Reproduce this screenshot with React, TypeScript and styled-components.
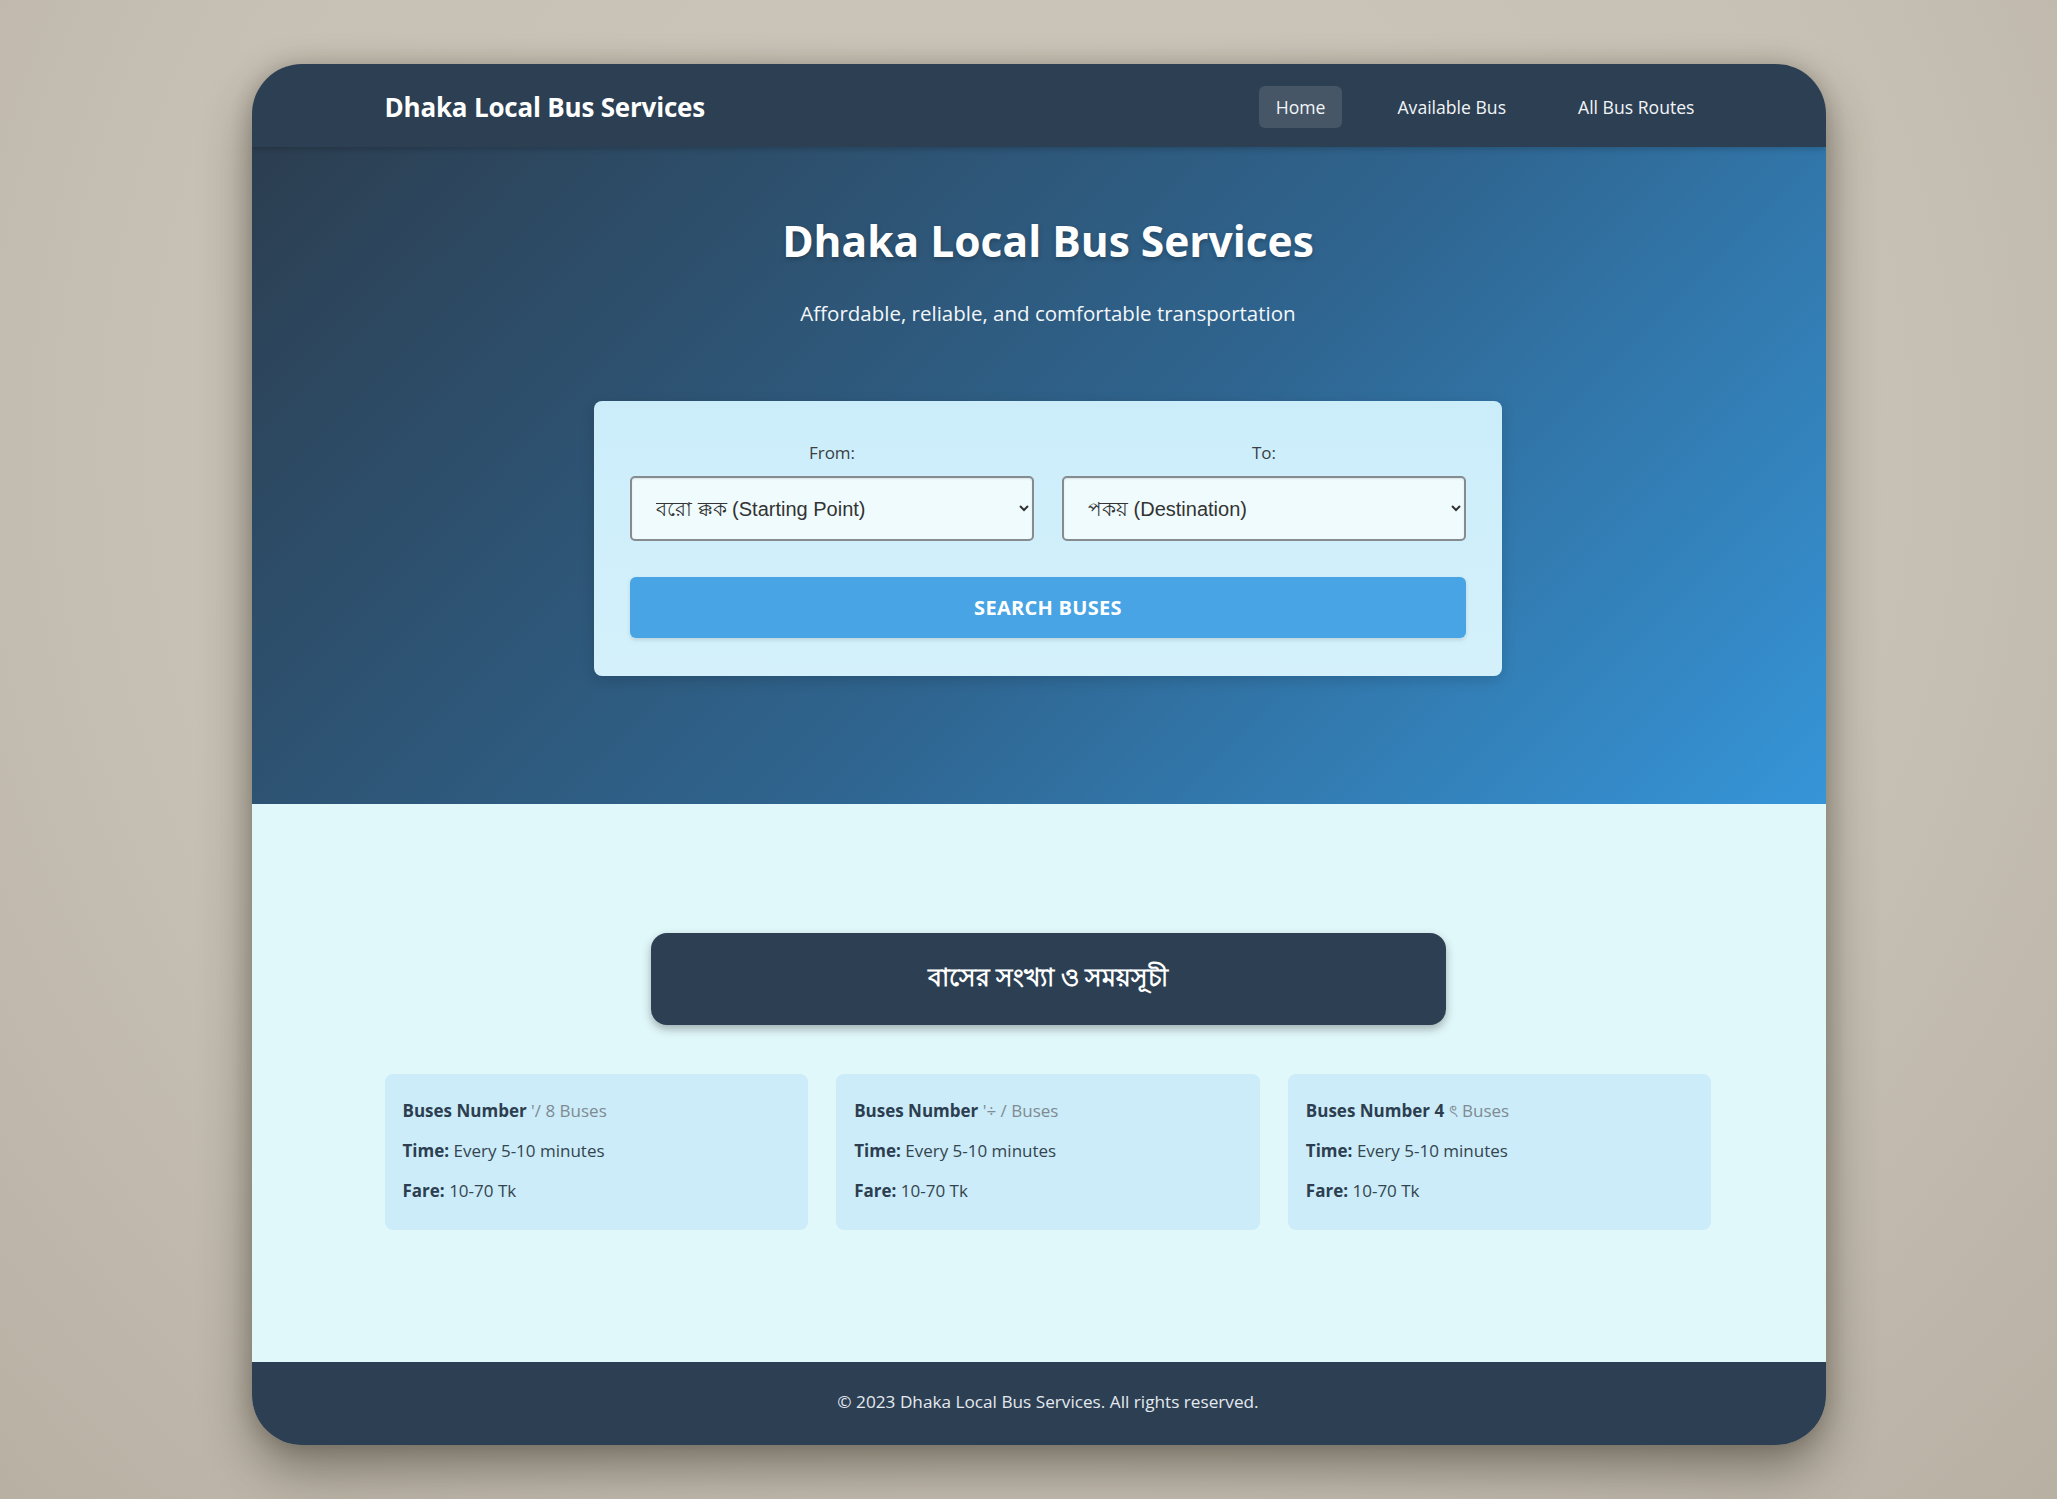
import React, {useState} from 'react';
import styled, {createGlobalStyle} from "styled-components";

const buses = [
    {id: 1, number: 'Buses Number', count: "'/ 8 Buses", time: 'Every 5-10 minutes', fare: '10-70 Tk'},
    {id: 2, number: 'Buses Number', count: "'÷ / Buses", time: 'Every 5-10 minutes', fare: '10-70 Tk'},
    {id: 3, number: 'Buses Number 4', count: 'ৎ Buses', time: 'Every 5-10 minutes', fare: '10-70 Tk'},
]

const navLinks = ['Home', 'Available Bus', 'All Bus Routes']

export default function App() {
    const [from, setFrom] = useState('start')
    const [to, setTo] = useState('dest')
    const [active, setActive] = useState('Home')

    return (
        <Page>
            <GlobalStyle/>
            <Frame>
                {/*Header*/}
                <Header>
                    <Container>
                        <HeaderRow>
                            <Brand>Dhaka Local Bus Services</Brand>
                            <Nav>
                                {navLinks.map(l => (
                                    <NavLink key={l} active={active === l} onClick={() => setActive(l)}>{l}</NavLink>
                                ))}
                            </Nav>
                        </HeaderRow>
                    </Container>
                </Header>

                {/*Hero with search*/}
                <Hero>
                    <HeroTitle>Dhaka Local Bus Services</HeroTitle>
                    <HeroSubtitle>Affordable, reliable, and comfortable transportation</HeroSubtitle>
                    <SearchCard>
                        <Fields>
                            <Field>
                                <Label>From:</Label>
                                <Select value={from} onChange={e => setFrom(e.target.value)}>
                                    <option value="start">বরো ক্কক (Starting Point)</option>
                                    <option value="gabtoli">Gabtoli</option>
                                    <option value="mirpur">Mirpur</option>
                                </Select>
                            </Field>
                            <Field>
                                <Label>To:</Label>
                                <Select value={to} onChange={e => setTo(e.target.value)}>
                                    <option value="dest">পকয় (Destination)</option>
                                    <option value="motijheel">Motijheel</option>
                                    <option value="sadarghat">Sadarghat</option>
                                </Select>
                            </Field>
                        </Fields>
                        <SearchButton>Search Buses</SearchButton>
                    </SearchCard>
                </Hero>

                {/*Schedule*/}
                <Schedule>
                    <Container>
                        <ScheduleTitle>বাসের সংখ্যা ও সময়সূচী</ScheduleTitle>
                        <CardsGrid>
                            {buses.map(b => (
                                <BusCard key={b.id}>
                                    <Line><b>{b.number}</b> <Muted>{b.count}</Muted></Line>
                                    <Line><b>Time:</b> {b.time}</Line>
                                    <Line><b>Fare:</b> {b.fare}</Line>
                                </BusCard>
                            ))}
                        </CardsGrid>
                    </Container>
                </Schedule>

                <Footer>© 2023 Dhaka Local Bus Services. All rights reserved.</Footer>
            </Frame>
        </Page>
    );
}

// Styles
const GlobalStyle = createGlobalStyle`
  * {
    box-sizing: border-box;
  }

  body {
    margin: 0;
    font-family: "Segoe UI", "Open Sans", "Noto Sans", sans-serif;
    background: #c9c2b6;
  }
`

const Page = styled.div`
  min-height: 1499px;
  padding: 64px 0 55px 252px;
  background: radial-gradient(ellipse at 50% 30%, #cdc6bb 0%, #c7c0b4 60%, #b8b0a3 100%);
`

const Frame = styled.div`
  width: 1574px;
  border-radius: 50px;
  overflow: hidden;
  box-shadow: 0 24px 50px rgba(40, 35, 25, 0.45), 0 0 20px rgba(40, 35, 25, 0.2);
`

const Container = styled.div`
  max-width: 1327px;
  margin: 0 auto;
`

const Header = styled.header`
  height: 83px;
  padding-left: 18px;
  background: #2d3f53;
  display: flex;
  align-items: center;
  box-shadow: 0 2px 6px rgba(0, 0, 0, 0.2);
  position: relative;
  z-index: 1;
`

const HeaderRow = styled.div`
  display: flex;
  align-items: center;
  justify-content: space-between;
  width: 1327px;
`

const Brand = styled.h1`
  margin: 2px 0 0;
  color: #fff;
  font-size: 26px;
  font-weight: 700;
  letter-spacing: -0.2px;
`

const Nav = styled.nav`
  display: flex;
  gap: 38px;
  margin-top: 2px;
`

const NavLink = styled.a<{ active?: boolean }>`
  padding: 9px 17px;
  border-radius: 6px;
  color: #f2f5f8;
  font-size: 17.6px;
  cursor: pointer;
  background: ${p => p.active ? 'rgba(255, 255, 255, 0.12)' : 'transparent'};
`

const Hero = styled.section`
  height: 657px;
  padding: 68px 0 0 18px;
  display: flex;
  flex-direction: column;
  align-items: center;
  background: linear-gradient(135deg, #2c3e50 0%, #2f6590 55%, #3695d8 100%);
  color: #fff;
`

const HeroTitle = styled.h2`
  margin: 0;
  font-size: 42.5px;
  font-weight: 700;
  line-height: 1.2;
  text-shadow: 0 2px 4px rgba(0, 0, 0, 0.25);
`

const HeroSubtitle = styled.p`
  margin: 33px 0 0;
  font-size: 20.5px;
  color: #f3f7fa;
`

const SearchCard = styled.div`
  margin-top: 74px;
  width: 908px;
  padding: 40px 36px 38px;
  border-radius: 8px;
  background: linear-gradient(180deg, #cbedfa 0%, #d4f1fb 100%);
  box-shadow: 0 4px 14px rgba(0, 0, 0, 0.15);
`

const Fields = styled.div`
  display: grid;
  grid-template-columns: 1fr 1fr;
  gap: 28px;
`

const Field = styled.div`
  display: flex;
  flex-direction: column;
  align-items: center;
`

const Label = styled.label`
  margin-bottom: 12px;
  font-size: 17px;
  color: #3a3f44;
`

const Select = styled.select`
  width: 100%;
  height: 65px;
  padding: 0 14px 0 20px;
  border: 2px solid #868b8f;
  border-radius: 5px;
  background: #f0fbfd;
  font-family: "Liberation Sans", Arial, sans-serif;
  font-size: 20px;
  color: #333;
  box-shadow: inset 0 1px 2px rgba(0, 0, 0, 0.1);
`

const SearchButton = styled.button`
  margin-top: 36px;
  width: 100%;
  height: 61px;
  border: none;
  border-radius: 6px;
  background: #48a4e4;
  color: #fff;
  font-family: inherit;
  font-size: 20px;
  font-weight: 700;
  text-transform: uppercase;
  letter-spacing: 0.3px;
  cursor: pointer;
  box-shadow: 0 2px 4px rgba(0, 0, 0, 0.12);
`

const Schedule = styled.section`
  padding: 129px 0 132px 18px;
  background: #e1f8fb;
`

const ScheduleTitle = styled.h3`
  margin: 0 auto;
  width: 795px;
  height: 92px;
  display: flex;
  align-items: center;
  justify-content: center;
  border-radius: 16px;
  background: #2d3f53;
  color: #fff;
  font-size: 25px;
  font-weight: 700;
  box-shadow: 0 4px 10px rgba(0, 0, 0, 0.3);
`

const CardsGrid = styled.div`
  margin-top: 49px;
  display: grid;
  grid-template-columns: repeat(3, 1fr);
  gap: 28px;
`

const BusCard = styled.div`
  height: 156px;
  padding: 25px 18px 0;
  border-radius: 8px;
  background: #cbecf8;
  display: flex;
  flex-direction: column;
  gap: 16px;
`

const Line = styled.div`
  font-size: 17px;
  line-height: 24px;
  color: #34444f;

  b {
    color: #2c3e50;
  }
`

const Muted = styled.span`
  color: #7f8a92;
`

const Footer = styled.footer`
  height: 83px;
  padding: 0 0 5px 18px;
  display: flex;
  align-items: center;
  justify-content: center;
  background: #2d3f53;
  color: #e3e9ef;
  font-size: 17.2px;
`
